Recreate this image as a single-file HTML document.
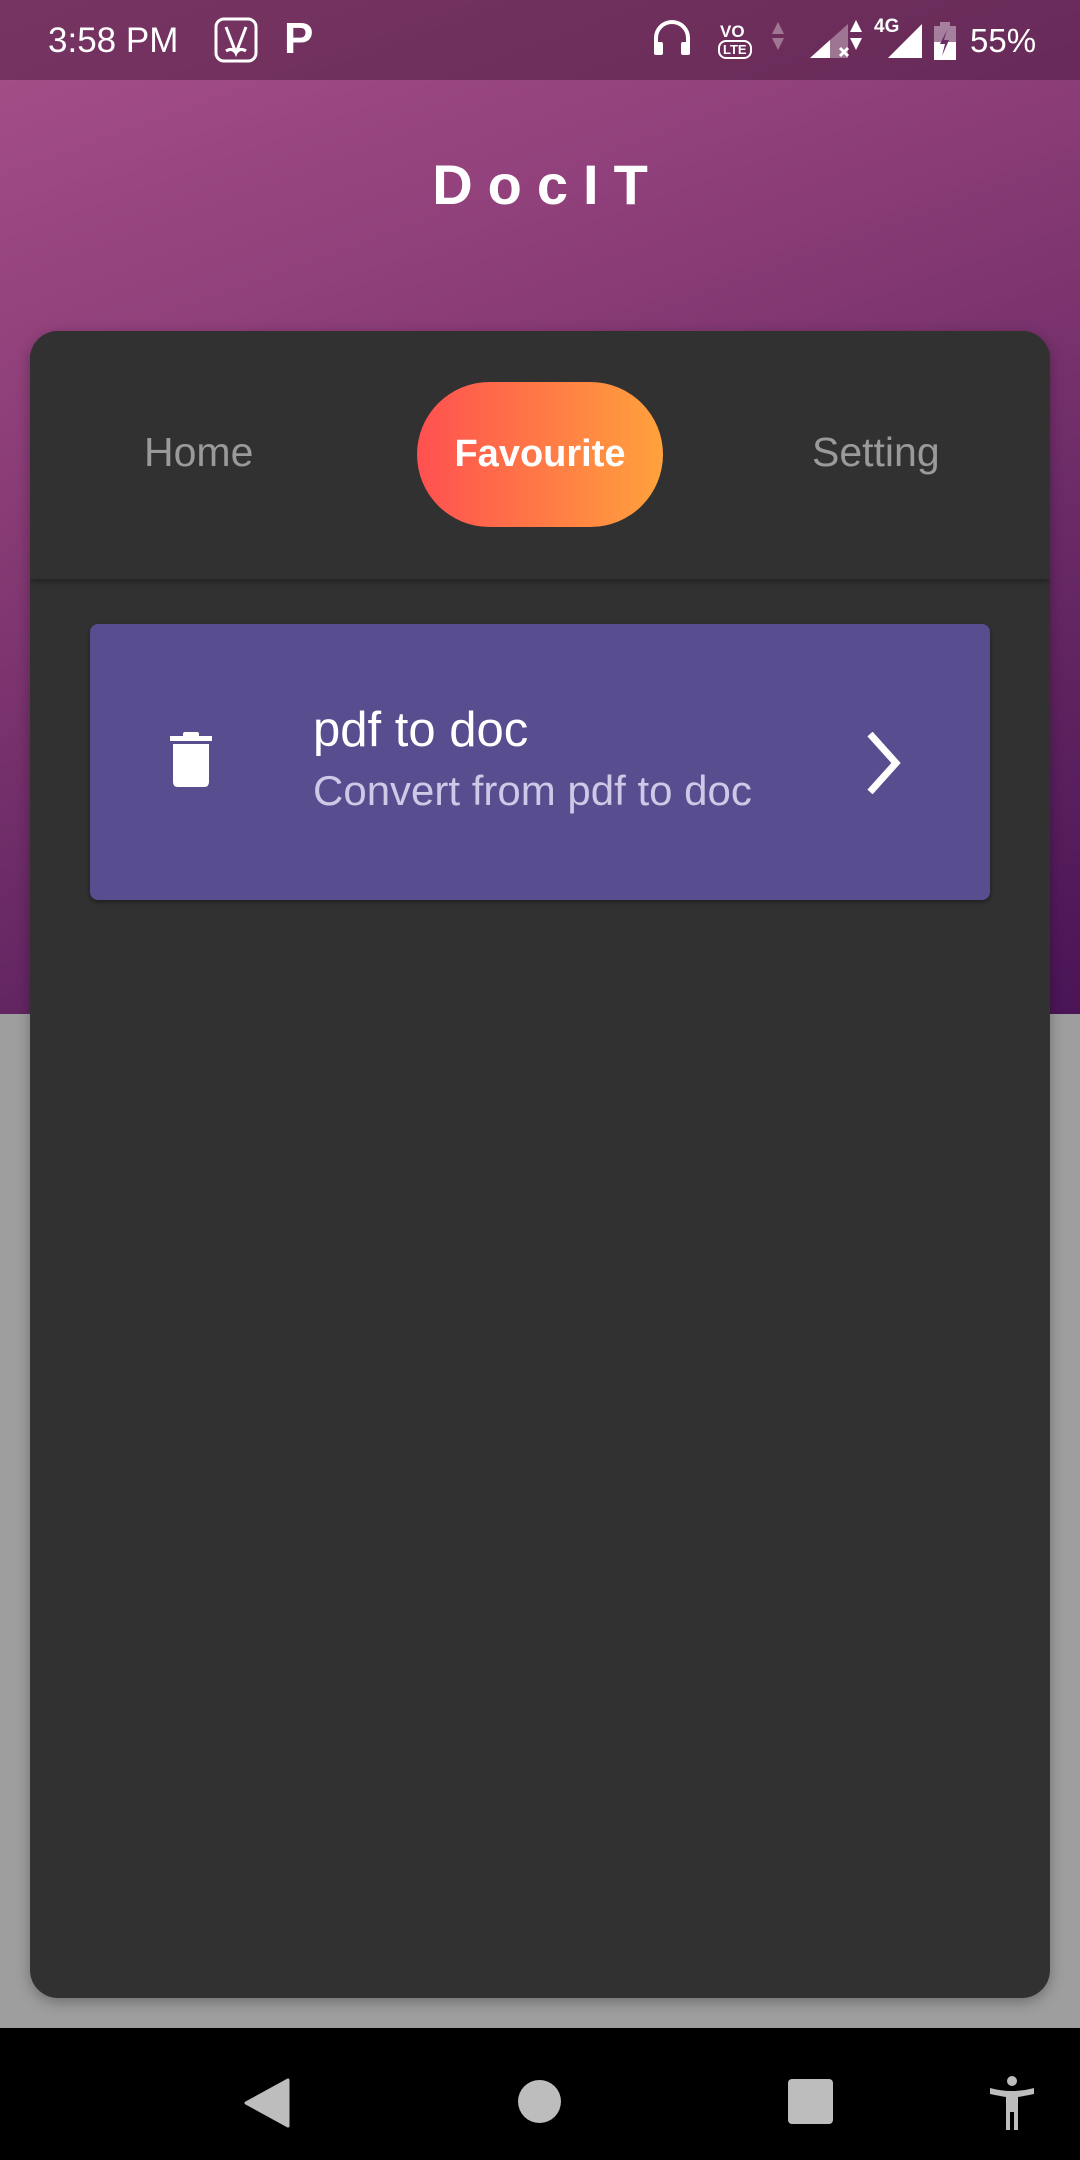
<!DOCTYPE html>
<html><head><meta charset="utf-8"><style>
*{margin:0;padding:0;box-sizing:border-box}
body{width:1080px;height:2160px;position:relative;overflow:hidden;background:#9e9e9e;font-family:"Liberation Sans",Roboto,sans-serif}
.bg{position:absolute;left:0;top:0;width:1080px;height:1014px;background:linear-gradient(160deg,#a8508a 0%,#8a3c76 35%,#6a2a66 65%,#4a1456 100%)}
.status{position:absolute;left:0;top:0;width:1080px;height:80px;background:rgba(60,20,50,0.45);color:#fff}
.title{position:absolute;top:152px;left:0;width:1080px;text-align:center;color:#fff;font-size:56px;font-weight:bold;letter-spacing:15px;padding-left:15px}
.card{position:absolute;left:30px;top:331px;width:1020px;height:1667px;background:#313131;border-radius:28px;overflow:hidden;box-shadow:0 4px 14px rgba(0,0,0,.3)}
.tabs{position:absolute;left:0;top:0;width:1020px;height:248px;background:#313131;box-shadow:0 3px 6px rgba(0,0,0,.3)}
.tab{position:absolute;top:98px;font-size:41px;color:#9a9a9a}
.pill{position:absolute;left:387px;top:51px;width:246px;height:145px;border-radius:73px;background:linear-gradient(90deg,#ff5050,#ffa23c);color:#fff;font-size:38px;font-weight:bold;text-align:center;line-height:145px}
.item{position:absolute;left:60px;top:293px;width:900px;height:276px;background:#574d8f;border-radius:8px;box-shadow:0 2px 4px rgba(0,0,0,.4)}
.nav{position:absolute;left:0;top:2028px;width:1080px;height:132px;background:#000}
</style></head><body>
<div class="bg"></div>
<div class="status">
 <div style="position:absolute;left:48px;top:21px;font-size:35px">3:58 PM</div>
 <svg style="position:absolute;left:214px;top:17px" width="44" height="46" viewBox="0 0 44 46"><rect x="2" y="2" width="40" height="42" rx="8" fill="none" stroke="#fff" stroke-width="3"/><path d="M12 10 L22 36 L32 10 M12 34 Q18 30 22 36 Q26 30 32 34" fill="none" stroke="#fff" stroke-width="3"/></svg>
 <div style="position:absolute;left:284px;top:14px;font-size:44px;font-weight:bold">P</div>
 <svg style="position:absolute;left:652px;top:20px" width="40" height="36" viewBox="0 0 40 36"><path d="M4 34 V18 A16 16 0 0 1 36 18 V34" fill="none" stroke="#fff" stroke-width="4"/><rect x="2" y="22" width="9" height="13" rx="2" fill="#fff"/><rect x="29" y="22" width="9" height="13" rx="2" fill="#fff"/></svg>
 <div style="position:absolute;left:720px;top:22px;font-size:17px;font-weight:bold">VO</div>
 <div style="position:absolute;left:718px;top:40px;font-size:13px;font-weight:bold;border:2px solid #fff;border-radius:8px;padding:0 3px">LTE</div>
 <svg style="position:absolute;left:770px;top:20px" width="16" height="32"><path d="M8 2 L14 14 H2Z M8 30 L14 18 H2Z" fill="#fff" opacity=".35"/></svg>
 <svg style="position:absolute;left:808px;top:22px" width="48" height="38"><path d="M2 36 L40 2 V36Z" fill="#fff" opacity=".35"/><path d="M2 36 L22 18 V36Z" fill="#fff"/><path d="M32 26 L40 34 M40 26 L32 34" stroke="#fff" stroke-width="3"/></svg>
 <svg style="position:absolute;left:848px;top:18px" width="16" height="34"><path d="M8 2 L14 14 H2Z M8 32 L14 20 H2Z" fill="#fff"/></svg>
 <div style="position:absolute;left:874px;top:16px;font-size:19px;font-weight:bold">4G</div>
 <svg style="position:absolute;left:886px;top:22px" width="38" height="38"><path d="M2 36 L36 2 V36Z" fill="#fff"/></svg>
 <svg style="position:absolute;left:934px;top:22px" width="22" height="38"><rect x="6" y="0" width="10" height="4" fill="#fff" opacity=".4"/><rect x="0" y="4" width="22" height="16" fill="#fff" opacity=".4"/><rect x="0" y="20" width="22" height="18" fill="#fff"/><path d="M13 8 L6 22 H11 L8 34 L15 18 H10Z" fill="#6a2a66"/></svg>
 <div style="position:absolute;left:970px;top:22px;font-size:33px">55%</div>
</div>
<div class="title">DocIT</div>
<div class="card">
 <div class="tabs">
  <div class="tab" style="left:114px">Home</div>
  <div class="pill">Favourite</div>
  <div class="tab" style="left:782px">Setting</div>
 </div>
 <div class="item">
  <svg style="position:absolute;left:80px;top:108px" width="42" height="56" viewBox="0 0 42 56"><rect x="0" y="4" width="42" height="5" fill="#fff"/><rect x="13" y="0" width="16" height="6" rx="2" fill="#fff"/><path d="M3 12 H39 V50 Q39 55 34 55 H8 Q3 55 3 50Z" fill="#fff"/></svg>
  <div style="position:absolute;left:223px;top:78px;font-size:49px;color:#fff">pdf to doc</div>
  <div style="position:absolute;left:223px;top:143px;font-size:42px;color:#cfc8e6">Convert from pdf to doc</div>
  <svg style="position:absolute;left:776px;top:108px" width="36" height="62" viewBox="0 0 36 62"><path d="M4 2 L30 31 L4 60" fill="none" stroke="#fff" stroke-width="7"/></svg>
 </div>
</div>
<div class="nav">
 <svg style="position:absolute;left:244px;top:50px" width="46" height="50"><path d="M44 2 V48 L2 25Z" fill="#bdbdbd" stroke="#bdbdbd" stroke-width="3" stroke-linejoin="round"/></svg>
 <div style="position:absolute;left:518px;top:52px;width:43px;height:43px;border-radius:50%;background:#bdbdbd"></div>
 <div style="position:absolute;left:788px;top:51px;width:45px;height:45px;border-radius:4px;background:#bdbdbd"></div>
 <svg style="position:absolute;left:988px;top:48px" width="48" height="54" viewBox="0 0 48 54"><circle cx="24" cy="5" r="5" fill="#bdbdbd"/><path d="M2 12 Q24 18 46 12 L46 18 Q36 20 30 21 V54 H26 V36 H22 V54 H18 V21 Q12 20 2 18Z" fill="#bdbdbd"/></svg>
</div>
</body></html>
